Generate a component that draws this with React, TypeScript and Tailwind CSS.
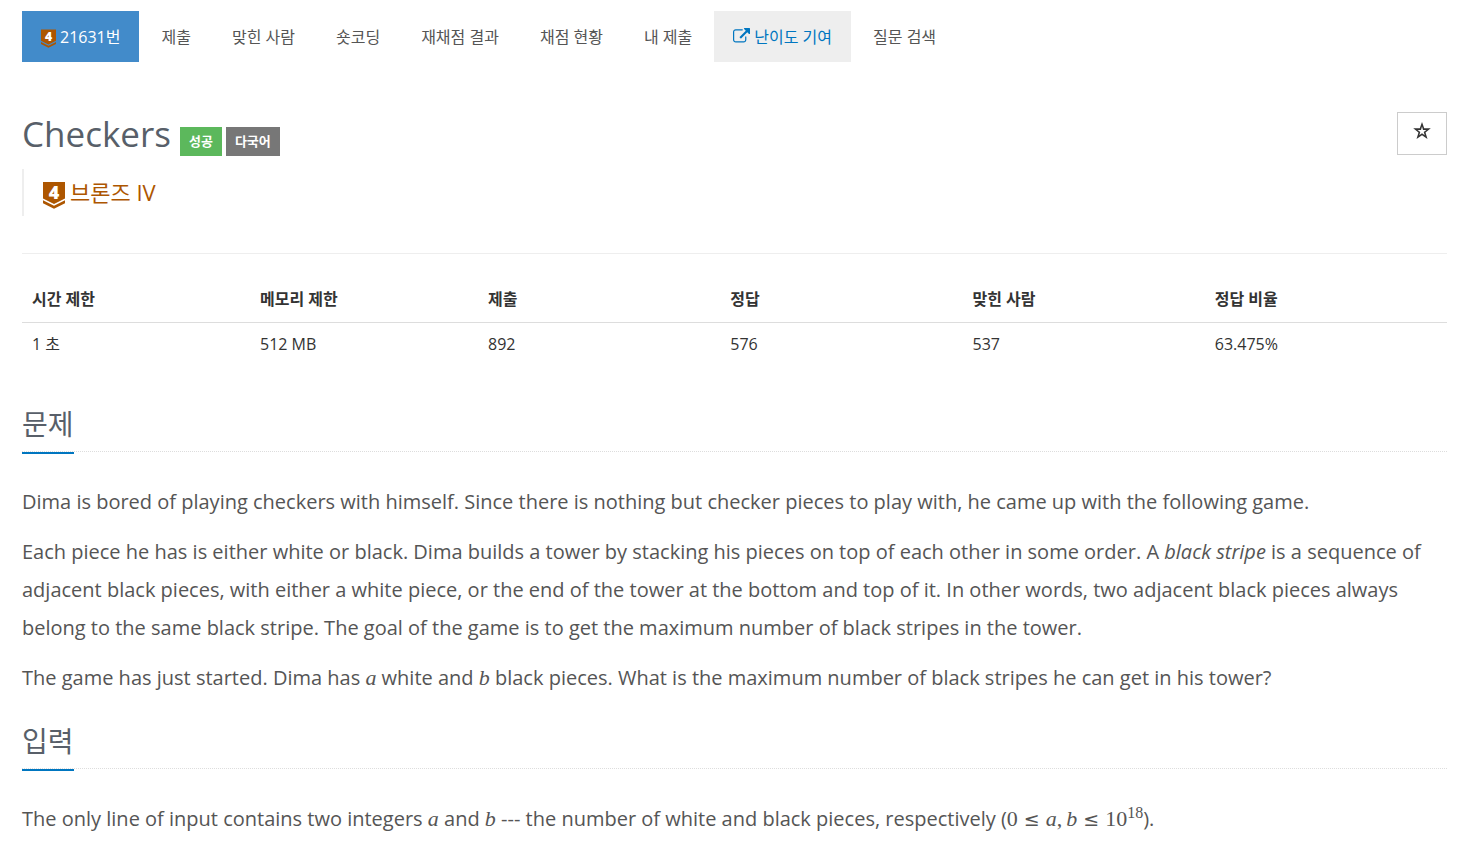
import type { ReactNode } from "react";

function TierBadge({ className }: { className: string }) {
  return (
    <svg viewBox="0 -5 22 32" className={className} aria-hidden="true">
      <path d="M0 0h22v16.5L11 22 0 16.5z" fill="#ad5600" />
      <path d="M0 18.2 11 23.7l11-5.500v3L11 26.700 0 21.200z" fill="#ad5600" />
      <text
        x="11"
        y="16.5"
        textAnchor="middle"
        fill="#fff"
        fontSize="18"
        fontWeight="800"
        fontFamily="Open Sans, sans-serif"
      >
        4
      </text>
    </svg>
  );
}

function ExternalLinkIcon() {
  return (
    <svg viewBox="0 0 1792 1792" className="h-[17px] w-[17px]" fill="currentColor" aria-hidden="true">
      <path d="M1408 928v320q0 119-84.5 203.5t-203.5 84.5h-832q-119 0-203.5-84.5t-84.5-203.5v-832q0-119 84.5-203.5t203.5-84.5h704q14 0 23 9t9 23v64q0 14-9 23t-23 9h-704q-66 0-113 47t-47 113v832q0 66 47 113t113 47h832q66 0 113-47t47-113v-320q0-14 9-23t23-9h64q14 0 23 9t9 23zm384-864v512q0 26-19 45t-45 19-45-19l-176-176-652 652q-10 10-23 10t-23-10l-114-114q-10-10-10-23t10-23l652-652-176-176q-19-19-19-45t19-45 45-19h512q26 0 45 19t19 45z" />
    </svg>
  );
}

function StarIcon() {
  return (
    <svg viewBox="0 0 18 18" className="h-[18px] w-[18px]" aria-hidden="true">
      <path
        fillRule="evenodd"
        fill="#333"
        d="M9 0 11.200 6.300h6.600l-5.300 4.100 2 6.600L9 13.200l-5.500 3.800 2-6.600L.2 6.300h6.600zM9 4.600 8 8H4.600l2.700 2-1 3.300L9 11.300l2.700 2-1-3.300 2.700-2H10z"
      />
    </svg>
  );
}

type Tab = { label: string; kind?: "active" | "highlight" };

const tabs: Tab[] = [
  { label: "21631번", kind: "active" },
  { label: "제출" },
  { label: "맞힌 사람" },
  { label: "숏코딩" },
  { label: "재채점 결과" },
  { label: "채점 현황" },
  { label: "내 제출" },
  { label: "난이도 기여", kind: "highlight" },
  { label: "질문 검색" },
];

const stats = [
  { label: "시간 제한", value: "1 초", width: "w-[16%]" },
  { label: "메모리 제한", value: "512 MB", width: "w-[16%]" },
  { label: "제출", value: "892", width: "w-[17%]" },
  { label: "정답", value: "576", width: "w-[17%]" },
  { label: "맞힌 사람", value: "537", width: "w-[17%]" },
  { label: "정답 비율", value: "63.475%", width: "w-[17%]" },
];

function tabStyle(kind: Tab["kind"]) {
  if (kind === "active") return "bg-[#428bca] text-white";
  if (kind === "highlight") return "bg-[#eeeeee] text-[#0076c0]";
  return "text-[#555555]";
}

function Headline({ children }: { children: ReactNode }) {
  return (
    <div className="mb-[31px] flex border-b border-dotted border-[#dddddd]">
      <h2 className="-mb-[3px] border-b-2 border-[#0076c0] pb-2 text-[28px] leading-10 text-[#585f69]">
        {children}
      </h2>
    </div>
  );
}

function Var({ children }: { children: ReactNode }) {
  return <i className="font-['Liberation_Serif',serif] text-[22px] leading-none">{children}</i>;
}

function LessOrEqual() {
  return <span className="mx-1.5 font-['DejaVu_Sans',sans-serif] text-[19px] leading-none">≤</span>;
}

export default function App() {
  return (
    <div className="bg-white pt-[11px] pr-[14px] pl-[22px] font-['Open_Sans','Noto_Sans_CJK_KR',sans-serif] text-base text-[#333333]">
      <nav>
        <ul className="flex flex-wrap gap-[3px]">
          {tabs.map((tab) => (
            <li key={tab.label}>
              <a
                href="#"
                className={`flex h-[51px] items-center gap-1 px-[19px] whitespace-nowrap ${tabStyle(tab.kind)}`}
              >
                {tab.kind === "active" && <TierBadge className="h-[22px] w-[15px]" />}
                {tab.kind === "highlight" && <ExternalLinkIcon />}
                {tab.label}
              </a>
            </li>
          ))}
        </ul>
      </nav>

      <header className="mt-[50px] flex items-start justify-between border-b border-[#eeeeee] pb-[37px]">
        <div>
          <div className="flex h-[44px] items-end gap-1">
            <h1 className="mr-[5px] text-[35px] leading-[44px] text-[#585f69]">Checkers</h1>
            <span className="flex h-[29px] items-center bg-[#5cb85c] px-[9px] text-[13px] font-bold text-white">
              성공
            </span>
            <span className="flex h-[29px] items-center bg-[#777777] px-[9px] text-[13px] font-bold text-white">
              다국어
            </span>
          </div>
          <blockquote className="mt-[13px] flex h-[47px] items-center gap-[5px] border-l-2 border-[#eeeeee] pl-[19px] text-[22px] text-[#ad5600]">
            <TierBadge className="h-8 w-[22px]" />
            브론즈 IV
          </blockquote>
        </div>
        <button
          type="button"
          aria-label="즐겨찾기"
          className="flex h-[43px] w-[50px] items-center justify-center border border-[#cccccc] bg-white pb-1.5"
        >
          <StarIcon />
        </button>
      </header>

      <table className="mt-[23px] w-full table-fixed text-left">
        <thead>
          <tr className="border-b border-[#dddddd]">
            {stats.map((s) => (
              <th key={s.label} className={`${s.width} h-[45px] px-[10px] font-bold`}>
                {s.label}
              </th>
            ))}
          </tr>
        </thead>
        <tbody>
          <tr>
            {stats.map((s) => (
              <td key={s.label} className="h-[43px] px-[10px]">
                {s.value}
              </td>
            ))}
          </tr>
        </tbody>
      </table>

      <main className="text-xl text-[#555555]">
        <section className="mt-[39px]">
          <Headline>문제</Headline>
          <div className="flex flex-col gap-3">
            <p className="leading-[38px]">
              Dima is bored of playing checkers with himself. Since there is nothing but checker pieces to play
              with, he came up with the following game.
            </p>
            <p className="leading-[38px]">
              Each piece he has is either white or black. Dima builds a tower by stacking his pieces on top of each
              other in some order. A <em>black stripe</em> is a sequence of adjacent black pieces, with either a
              white piece, or the end of the tower at the bottom and top of it. In other words, two adjacent black
              pieces always belong to the same black stripe. The goal of the game is to get the maximum number of
              black stripes in the tower.
            </p>
            <p className="leading-[38px]">
              The game has just started. Dima has <Var>a</Var> white and <Var>b</Var> black pieces. What is the
              maximum number of black stripes he can get in his tower?
            </p>
          </div>
        </section>

        <section className="mt-6">
          <Headline>입력</Headline>
          <p className="leading-[38px]">
            The only line of input contains two integers <Var>a</Var> and <Var>b</Var> --- the number of white and
            black pieces, respectively (
            <span className="font-['Liberation_Serif',serif] text-[22px] leading-none whitespace-nowrap">
              0<LessOrEqual />
              <i>a</i>,<i className="ml-1">b</i>
              <LessOrEqual />
              10<sup className="text-base leading-none">18</sup>
            </span>
            ).
          </p>
        </section>
      </main>
    </div>
  );
}
